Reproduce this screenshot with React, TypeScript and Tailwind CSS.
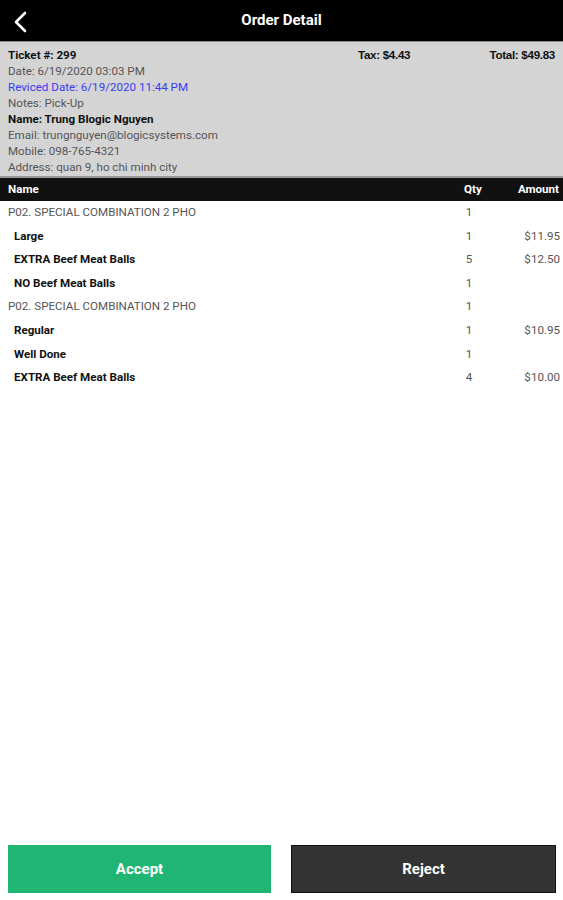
const items = [
  { name: 'P02. SPECIAL COMBINATION 2 PHO', qty: '1', amount: '', main: true },
  { name: 'Large', qty: '1', amount: '$11.95', main: false },
  { name: 'EXTRA Beef Meat Balls', qty: '5', amount: '$12.50', main: false },
  { name: 'NO Beef Meat Balls', qty: '1', amount: '', main: false },
  { name: 'P02. SPECIAL COMBINATION 2 PHO', qty: '1', amount: '', main: true },
  { name: 'Regular', qty: '1', amount: '$10.95', main: false },
  { name: 'Well Done', qty: '1', amount: '', main: false },
  { name: 'EXTRA Beef Meat Balls', qty: '4', amount: '$10.00', main: false },
];

export default function App() {
  return (
    <div className="w-[563px] h-[900px] bg-white flex flex-col font-['Roboto',sans-serif]">
      {/* Header */}
      <div className="h-[42px] bg-black flex items-center relative shrink-0 border-b border-[#888]">
        <svg className="absolute left-[13px] top-[11px]" width="16" height="22" viewBox="0 0 16 22">
          <path d="M12 2 L3 11 L12 20" stroke="white" strokeWidth="2.6" fill="none" strokeLinecap="round" strokeLinejoin="round" />
        </svg>
        <div className="flex-1 text-center text-white text-[15px] font-bold">Order Detail</div>
      </div>

      {/* Order info */}
      <div className="bg-[#d4d4d4] px-2 pt-[5px] pb-[1px] text-[11.6px] leading-[16px] text-[#555] border-b-2 border-[#999] shrink-0">
        <div className="flex">
          <span className="w-[350px] font-bold text-[#111]">Ticket #: 299</span>
          <span className="font-bold text-[#111] font-['Liberation_Sans',sans-serif] tracking-[-0.3px]">Tax: $4.43</span>
          <span className="ml-auto font-bold text-[#111] font-['Liberation_Sans',sans-serif] tracking-[-0.3px]">Total: $49.83</span>
        </div>
        <div>Date: 6/19/2020 03:03 PM</div>
        <div className="text-[#3b3bf0]">Reviced Date: 6/19/2020 11:44 PM</div>
        <div>Notes: Pick-Up</div>
        <div className="font-bold text-[#111]">Name: Trung Blogic Nguyen</div>
        <div>Email: trungnguyen@blogicsystems.com</div>
        <div>Mobile: 098-765-4321</div>
        <div>Address: quan 9, ho chi minh city</div>
      </div>

      {/* Table header */}
      <div className="h-[23px] bg-[#111] text-white text-[11.6px] font-bold flex items-center pl-2 pr-[4px] shrink-0">
        <span className="flex-1">Name</span>
        <span className="w-[18px] text-center mr-[36px]">Qty</span>
        <span>Amount</span>
      </div>

      {/* Items */}
      <div className="flex-1">
        {items.map((it, i) => (
          <div key={i} className="h-[23.6px] flex items-center text-[11.6px] pr-[3px]">
            <span className={it.main ? 'flex-1 pl-2 text-[#555]' : 'flex-1 pl-[14px] font-bold text-[#111]'}>{it.name}</span>
            <span className="w-[18px] text-center text-[#555] mr-[22px]">{it.qty}</span>
            <span className="w-[60px] text-right text-[#555]">{it.amount}</span>
          </div>
        ))}
      </div>

      {/* Buttons */}
      <div className="flex gap-[20px] pl-[8px] pr-[7px] pb-[7px] shrink-0">
        <button className="flex-1 h-[48px] bg-[#21b573] text-white text-[15px] font-bold">Accept</button>
        <button className="flex-1 h-[48px] bg-[#333] text-white text-[15px] font-bold border border-[#111]">Reject</button>
      </div>
    </div>
  );
}
